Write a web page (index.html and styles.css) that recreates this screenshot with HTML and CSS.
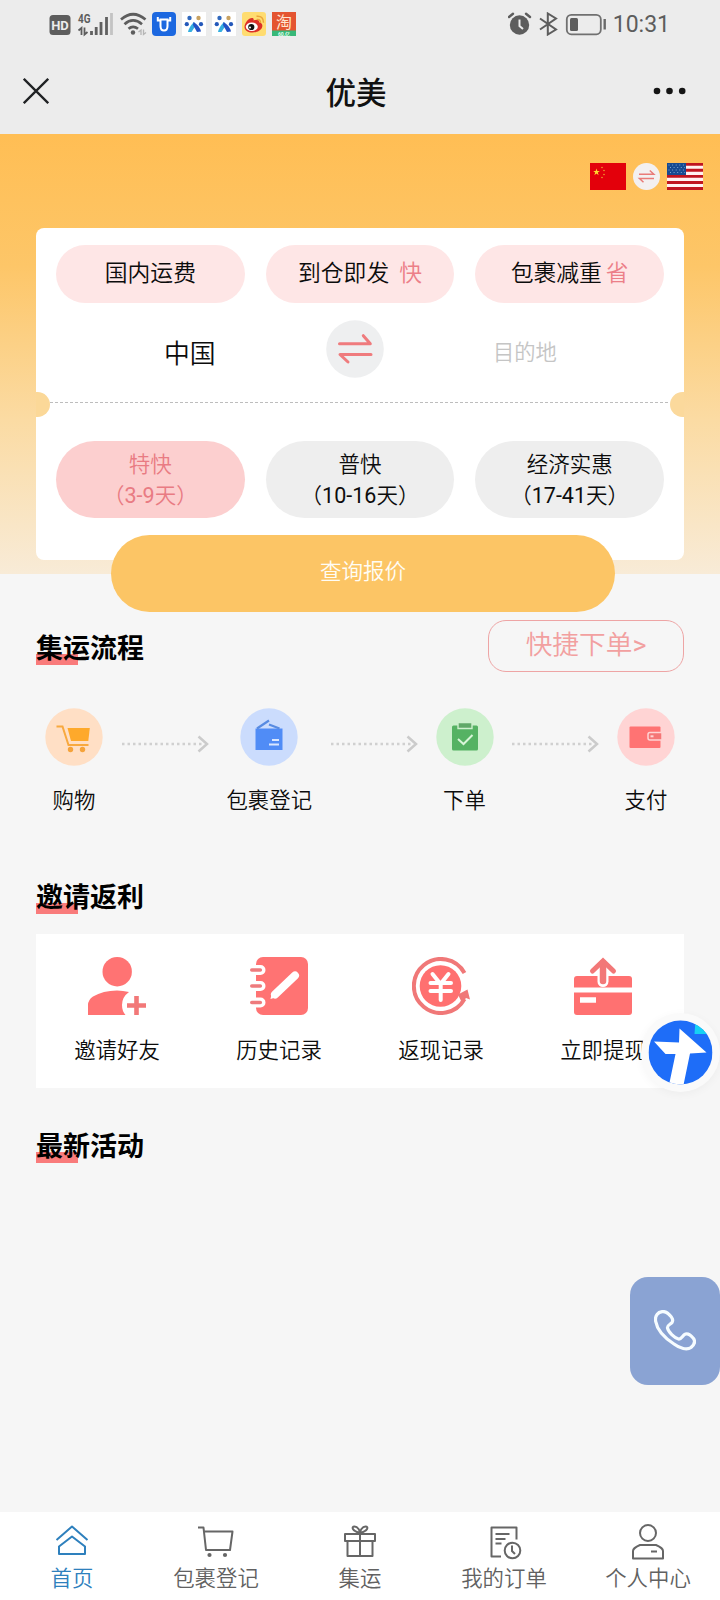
FILE: index.html
```html
<!DOCTYPE html>
<html lang="zh-CN">
<head>
<meta charset="utf-8">
<title>优美</title>
<link rel="stylesheet" href="styles.css">
</head>
<body>
<div class="app">
  <header class="top">
    <div class="status">
      <svg class="status-left" width="300" height="48" viewBox="0 0 300 48">
        <rect x="49.5" y="15" width="21" height="20" rx="3.5" fill="#5d5d5d"/>
        <text x="60" y="30" class="hd" text-anchor="middle">HD</text>
        <text x="78" y="22.800" class="net" textLength="12.500" lengthAdjust="spacingAndGlyphs">4G</text>
        <path d="M78.500 30.500l3-2.500v7M84.500 27.500v7l3-2.500" fill="none" stroke="#5d5d5d" stroke-width="1.800"/>
        <path d="M91.500 35v-4M96.200 35v-8M101 35V22M106.500 35V17" stroke="#606060" stroke-width="2.800"/>
        <path d="M111.500 35V13" stroke="#c3c3c3" stroke-width="2.800"/>
        <g fill="none" stroke="#5d5d5d" stroke-width="2.700"><path d="M121 19.500q12-10.500 24.500 0M124.500 24.200q8.500-7.500 17.500 0M128.500 28.700q4.500-3.800 9.500 0"/></g>
        <circle cx="133" cy="32.500" r="2.200" fill="#5d5d5d"/>
        <path d="M138.500 32l2.500-2v5M143.500 29.500v5l2.500-2" fill="none" stroke="#b5b5b5" stroke-width="1.300"/>
        <rect x="152" y="12" width="24" height="24" rx="4" fill="#1c68e0"/>
        <path d="M157.800 17v3.500h2.500M170.200 17v3.500h-2.500M160.500 19.500h7V26q0 4.500-3.500 4.500t-3.500-4.500z" fill="none" stroke="#fff" stroke-width="2"/>
        <g id="people">
          <rect x="182" y="12" width="24" height="24" fill="#fff"/>
          <circle cx="189.500" cy="18" r="2.200" fill="#3169bd"/><circle cx="198.500" cy="18" r="2.200" fill="#c8a262"/>
          <circle cx="186.800" cy="24.200" r="2.100" fill="#2358ba"/><circle cx="201" cy="24.200" r="2.100" fill="#2358ba"/>
          <path d="M188 32q1-5 6-10l2 3-4.500 7z" fill="#36afe0"/><path d="M193.500 22q6.500 4 7.500 9.500l-4 .5-4-7z" fill="#2352c5"/>
        </g>
        <use href="#people" x="30"/>
        <rect x="242" y="12" width="24" height="24" rx="3" fill="#ffdc70"/>
        <path d="M244.500 27c0-4 4-9 7.500-9 1.500 0 2 1 1.500 2.500 3-1.500 6-1 5.500 1.500 3 1 4 3 3 5.500-1 3-5 5-9.500 5s-8-2-8-5.500z" fill="#dc3028"/>
        <ellipse cx="251.800" cy="26.800" rx="6" ry="4.300" fill="#fff"/><circle cx="251.300" cy="27" r="3.100" fill="#111"/><circle cx="250" cy="27.500" r="1" fill="#fff"/>
        <path d="M257 19.500q3.500-.500 3.500 3.500M256.500 16.300q7-.800 7 6.500" fill="none" stroke="#eba43a" stroke-width="1.500"/>
        <rect x="272" y="12" width="24" height="24" fill="#e45430"/><rect x="272" y="30.500" width="24" height="5.500" fill="#37b878"/>
        <text x="284" y="27.500" class="tao" text-anchor="middle">淘</text>
        <text x="284" y="35.500" class="tao-sub" text-anchor="middle">60.亿</text>
      </svg>
      <div class="status-right">
        <svg width="100" height="24" viewBox="507 12 100 24">
          <circle cx="518.500" cy="25" r="9.700" fill="#5d5d5d"/><path d="M518.500 19.500V26l3.500 3" fill="none" stroke="#ececec" stroke-width="2"/>
          <path d="M508 17l4-3.300M529 17l-4-3.300" stroke="#5d5d5d" stroke-width="2.400" stroke-linecap="round"/>
          <path d="M539 18.500l16 11-8.200 5V13.500l8.200 5-16 11" fill="none" stroke="#5d5d5d" stroke-width="2"/>
          <rect x="565.800" y="14.800" width="34" height="19.500" rx="4.500" fill="none" stroke="#707070" stroke-width="1.800"/>
          <rect x="569" y="18" width="8" height="13" rx="1.500" fill="#5d5d5d"/><path d="M603.700 19v10.500" stroke="#6a6a6a" stroke-width="2.400"/>
        </svg>
        <span class="time">10:31</span>
      </div>
    </div>
    <div class="nav">
      <svg width="26" height="26" viewBox="0 0 26 26"><path d="M.800.800l24.400 24.400M25.200.800L.800 25.200" stroke="#202224" stroke-width="2.300"/></svg>
      <h1 class="title">优美</h1>
      <svg width="33" height="8" viewBox="0 0 33 8" fill="#151515"><circle cx="4" cy="4" r="3.300"/><circle cx="16.500" cy="4" r="3.300"/><circle cx="29.200" cy="4" r="3.300"/></svg>
    </div>
  </header>

  <section class="hero">
    <div class="flags">
      <svg width="36" height="27" viewBox="0 0 36 27"><rect width="36" height="27" fill="#e3000b"/><path d="M6.500 5.500l.8 2.500h2.500L7.800 9.600l.8 2.600-2.100-1.600-2.100 1.600.8-2.600L3.200 8h2.500z" fill="#ffdc30"/><g fill="#f1be38"><circle cx="12" cy="4.500" r=".7"/><circle cx="14" cy="7.500" r=".7"/><circle cx="14" cy="11.500" r=".7"/><circle cx="12" cy="14.500" r=".7"/></g></svg>
      <svg width="27" height="27" viewBox="0 0 27 27"><circle cx="13.500" cy="13.500" r="13.500" fill="#f3f0f0"/><path d="M6 11.200h14.800l-4-3.700M21 15.500H6.500l4 3.700" fill="none" stroke="#e97b78" stroke-width="1.500"/></svg>
      <svg width="36" height="27" viewBox="0 0 36 27"><rect width="36" height="27" fill="#fff1f1"/><path d="M0 1.300h36M0 7.200h36M0 13.400h36M0 19.500h36M0 25.500h36" stroke="#c0141f" stroke-width="2.900"/><rect width="19" height="12" fill="#164a91"/><path d="M1.500 2h17M3 4.500h15M1.500 7h17M3 9.500h15" stroke="#7fa6cf" stroke-width="1" stroke-dasharray="1 2.600"/></svg>
    </div>
    <div class="quote">
      <div class="trio">
        <div class="pill tag">国内运费</div>
        <div class="pill tag">到仓即发<em class="far">快</em></div>
        <div class="pill tag">包裹减重<em class="near">省</em></div>
      </div>
      <div class="route">
        <span class="from">中国</span>
        <svg width="58" height="58" viewBox="0 0 58 58"><circle cx="29" cy="29" r="28.800" fill="#eeeff0"/><path d="M13.500 23.700h30.800l-7-8M45 34.500H14l8 7.500" fill="none" stroke="#ef7b7d" stroke-width="3" stroke-linecap="round" stroke-linejoin="round"/></svg>
        <span class="to">目的地</span>
      </div>
      <div class="perforation"></div>
      <div class="trio speeds">
        <div class="pill speed chosen"><span>特快<br>（<b>3-9</b>天）</span></div>
        <div class="pill speed"><span>普快<br>（<b>10-16</b>天）</span></div>
        <div class="pill speed"><span>经济实惠<br>（<b>17-41</b>天）</span></div>
      </div>
    </div>
  </section>

  <main class="main">
    <div class="query">查询报价</div>
    <div class="head-row">
      <h2 class="heading">集运流程</h2>
      <div class="quick">快捷下单<b>&gt;</b></div>
    </div>
    <div class="steps">
      <div class="step">
        <svg width="58" height="58" viewBox="0 0 58 58"><circle cx="29" cy="29" r="28.700" fill="#ffdfc5"/><path d="M11.500 18.500h6l6 18.500h20" fill="none" stroke="#f8a93f" stroke-width="2"/><path d="M22.500 20h22.300l-1.500 13H26z" fill="#fea92b"/><circle cx="25.500" cy="41.500" r="2.700" fill="#f5a33b"/><circle cx="37.500" cy="41.500" r="2.700" fill="#f5a33b"/></svg>
        <span>购物</span>
      </div>
      <svg class="arrow" width="88" height="18" viewBox="0 0 88 18"><path d="M1 9H82" stroke="#d0d0d0" stroke-width="2.500" stroke-dasharray="2.500 3"/><path d="M77.500 1.500L86 9l-8.500 7.500" fill="none" stroke="#cbcbcb" stroke-width="2.500"/></svg>
      <div class="step">
        <svg width="58" height="58" viewBox="0 0 58 58"><circle cx="29" cy="29" r="28.700" fill="#cbdcfd"/><path d="M15.500 20.500h27V42h-27z" fill="#508cf6"/><path d="M17 20.500l12-8M29 16.500l10.500 4" fill="none" stroke="#588be2" stroke-width="2.200"/><path d="M32 32h7M29 36.500h10" stroke="#d8e6ff" stroke-width="2.200"/></svg>
        <span>包裹登记</span>
      </div>
      <svg class="arrow" width="88" height="18" viewBox="0 0 88 18"><path d="M1 9H82" stroke="#d0d0d0" stroke-width="2.500" stroke-dasharray="2.500 3"/><path d="M77.500 1.500L86 9l-8.500 7.500" fill="none" stroke="#cbcbcb" stroke-width="2.500"/></svg>
      <div class="step">
        <svg width="58" height="58" viewBox="0 0 58 58"><circle cx="29" cy="29" r="28.700" fill="#cdf0cd"/><rect x="16" y="17.500" width="26" height="25" rx="1.500" fill="#55b263"/><path d="M22 14.500h14v6H22z" fill="#60a868" stroke="#cdf0cd" stroke-width="1.400"/><path d="M22 31l5.500 5 9-9" fill="none" stroke="#d8f5d8" stroke-width="2"/></svg>
        <span>下单</span>
      </div>
      <svg class="arrow" width="88" height="18" viewBox="0 0 88 18"><path d="M1 9H82" stroke="#d0d0d0" stroke-width="2.500" stroke-dasharray="2.500 3"/><path d="M77.500 1.500L86 9l-8.500 7.500" fill="none" stroke="#cbcbcb" stroke-width="2.500"/></svg>
      <div class="step">
        <svg width="58" height="58" viewBox="0 0 58 58"><circle cx="29" cy="29" r="28.700" fill="#ffd4d4"/><rect x="12.500" y="18.500" width="31" height="21.500" rx="1" fill="#ff7373"/><path d="M45 24.500H33a2 2 0 0 0-2 2v3.500a2 2 0 0 0 2 2h12z" fill="#f57676" stroke="#ffd4d4" stroke-width="1.500"/><path d="M33.500 28.300h3" stroke="#ffd4d4" stroke-width="2"/></svg>
        <span>支付</span>
      </div>
    </div>

    <h2 class="heading">邀请返利</h2>
    <div class="rebate">
      <div class="cell">
        <svg width="58" height="58" viewBox="0 0 58 58" fill="#ff7373"><circle cx="29.200" cy="14.700" r="14.700"/><path d="M0 58V48q0-5 5-8.500 10-6 24-6 6 0 12 1.500-7 5-7 13 0 6 3.500 10z"/><path d="M39 48.500h19M48.500 39v19" stroke="#f27878" stroke-width="4.600"/></svg>
        <span>邀请好友</span>
      </div>
      <div class="cell">
        <svg width="58" height="58" viewBox="0 0 58 58"><rect x="6" width="52" height="58" rx="7" fill="#ff7373"/><g fill="none" stroke="#fff" stroke-width="10" stroke-linecap="round"><path d="M4 13h6.500M4 29h6.500M4 45.500h6.500"/></g><g fill="none" stroke="#ee7b7d" stroke-width="3.600" stroke-linecap="round"><path d="M1.800 13h8.500M1.800 29h8.500M1.800 45.500h8.500"/></g><path d="M25 37.500l20-19" stroke="#fff" stroke-width="8" stroke-linecap="round"/><path d="M20.500 42l1.500-7 5 5z" fill="#fff"/></svg>
        <span>历史记录</span>
      </div>
      <div class="cell">
        <svg width="58" height="58" viewBox="0 0 58 58"><circle cx="28.500" cy="29" r="20.800" fill="#ff7070"/><path d="M52.500 16A27 27 0 1 0 52.500 42" fill="none" stroke="#f07878" stroke-width="4"/><path d="M46 37.500l9.500-5 2.500 10-4-1.500-4 5z" fill="#f07878"/><path d="M20.500 17l8 10 8-10M18.500 26h20.500M18.500 34h20.500M28.700 26v17" fill="none" stroke="#fff" stroke-width="4" stroke-linecap="round"/></svg>
        <span>返现记录</span>
      </div>
      <div class="cell">
        <svg width="58" height="58" viewBox="0 0 58 58"><rect y="19" width="58" height="39" rx="3" fill="#ff7171"/><path d="M0 33h58" stroke="#fff" stroke-width="5"/><path d="M6 43h16" stroke="#fff" stroke-width="5.500"/><path d="M29 18v6.500" stroke="#fff" stroke-width="11" stroke-linecap="round"/><path d="M29 6v18" stroke="#f27878" stroke-width="6.500" stroke-linecap="round"/><path d="M18.500 14L29 4 39.500 14" fill="none" stroke="#f27878" stroke-width="5" stroke-linecap="round"/></svg>
        <span>立即提现</span>
      </div>
    </div>
    <h2 class="heading">最新活动</h2>
  </main>

  <nav class="tabs">
    <div class="tab active">
      <svg width="36" height="36" viewBox="0 0 36 36"><path d="M2.500 16L18 2.500 33.500 16M5 22.500L18 12.500l13 10V30H5z" stroke-linejoin="round"/></svg>
      <span>首页</span>
    </div>
    <div class="tab">
      <svg width="38" height="36" viewBox="0 0 38 36"><path d="M1 3.500h5.500L9 26h24L35.500 7.500H7" stroke-linejoin="round"/><circle cx="12.500" cy="31" r="2.100" fill="#666" stroke="none"/><circle cx="28" cy="31" r="2.100" fill="#666" stroke="none"/></svg>
      <span>包裹登记</span>
    </div>
    <div class="tab">
      <svg width="36" height="36" viewBox="0 0 36 36"><path d="M3 10h30v7H3zM5.500 17v15h25V17M18 10v22M18 9C10 7 9 2.500 12.500 2.500S18 7 18 9c0-2 2-6.500 5.500-6.500S26 7 18 9z" stroke-linejoin="round"/></svg>
      <span>集运</span>
    </div>
    <div class="tab">
      <svg width="36" height="36" viewBox="0 0 36 36"><path d="M15 32.500H5.500V3.500h25v12M9.500 10h14M9.500 15h10M9.500 19.500h6" stroke-linejoin="round"/><circle cx="26.500" cy="26.500" r="7.800"/><path d="M26 21.500V27l3 3"/></svg>
      <span>我的订单</span>
    </div>
    <div class="tab">
      <svg width="36" height="36" viewBox="0 0 36 36"><circle cx="18" cy="9" r="8"/><path d="M3 34.500V27q0-3 7-6h16q7 3 7 6v7.500zM21 27.500h6" stroke-linejoin="round"/></svg>
      <span>个人中心</span>
    </div>
  </nav>

  <div class="assist">
    <svg width="65" height="65" viewBox="0 0 64 65"><defs><clipPath id="disc"><circle cx="32" cy="32.500" r="32"/></clipPath></defs><g clip-path="url(#disc)"><rect width="64" height="65" fill="#1e6df8"/><path d="M47 0h17v14H46z" fill="#16d1f4"/><path d="M31 8.500l27 24-16.500 1L35 65H20.500L27 34H17L5.500 21.500l25 1z" fill="#fff"/></g></svg>
  </div>
  <div class="call">
    <svg width="42" height="42" viewBox="0 0 42 42"><path d="M3 4.500C5.500 1 11 .5 14 3.500c3 2.500 6 6 4 9-1.500 2-5 2.500-4.500 5.500.7 4 7 10 11 11 3 .7 4-4 7-5 3-.8 6 2 8 4.500 2 3 .5 6.500-2.500 9-4 3-11 1-17-3.500C10 27.500 3 19 1.700 11.500 1.200 9 1.500 6.500 3 4.500z" fill="none" stroke="#f6fcff" stroke-width="3.200"/></svg>
  </div>
</div>
</body>
</html>
```

FILE: styles.css
```css
* { box-sizing: border-box; }

body {
  margin: 0;
  background: #f6f6f6;
  color: #0c0c0c;
  font-family: Roboto, "Noto Sans CJK SC", sans-serif;
  font-weight: 350;
}

svg { display: block; flex: none; }
b { font-weight: 400; }

.app {
  position: relative;
  display: flex;
  flex-direction: column;
  width: 720px;
  height: 1600px;
  overflow: hidden;
}

/* Status bar and title bar */
.top { height: 134px; background: #ececec; }
.status { display: flex; justify-content: space-between; height: 48px; padding-right: 50px; }
.status-right { display: flex; align-items: center; gap: 5px; color: #5d5d5d; }
.time { font-size: 23px; font-weight: 400; line-height: 28px; padding-top: 2px; }
.hd { fill: #ececec; font: 700 13px Roboto, sans-serif; }
.net { fill: #5d5d5d; font: 700 12px Roboto, sans-serif; }
.tao { fill: #ffe4cf; font: 400 16px "Noto Sans CJK SC", sans-serif; }
.tao-sub { fill: #e4fff0; font: 700 5px Roboto, "Noto Sans CJK SC", sans-serif; }
.nav { display: flex; align-items: center; justify-content: space-between; height: 86px; padding: 0 34px 0 23px; }
.title { margin: 5px 0 0 10px; font-size: 30.500px; line-height: 44px; font-weight: 500; color: #111; }

/* Hero */
.hero {
  height: 440px;
  flex: none;
  padding: 29px 36px 0;
  background: linear-gradient(#ffbe54 0%, #fdc668 30%, #fbdba3 65%, #f8ebd7 100%);
}
.flags { display: flex; justify-content: flex-end; gap: 7px; height: 27px; margin-right: -19px; }
.quote { height: 332px; margin-top: 38px; padding-top: 17px; border-radius: 8px; background: #fff; }
.trio { display: grid; grid-template-columns: repeat(3, 1fr); gap: 21px; padding: 0 20px; }
.pill { display: flex; align-items: center; justify-content: center; text-align: center; }
.tag { height: 58px; padding-bottom: 5px; border-radius: 29px; background: #fee6e6; font-size: 22.800px; }
.tag em { font-style: normal; color: #ec7f88; }
.far { margin-left: 10px; }
.near { margin-left: 4px; }
.route { display: grid; grid-template-columns: 290px 58px 1fr; align-items: center; height: 92px; margin-bottom: 7px; }
.from { padding: 5px 0 0 128px; font-size: 25.800px; }
.to { padding: 3px 0 0 109px; font-size: 21.300px; color: #c5c5c5; }
.perforation {
  display: flex;
  justify-content: space-between;
  height: 1px;
  margin: 0 14px;
  background: repeating-linear-gradient(90deg, #bdbdbd 0 3px, transparent 3px 5px);
}
.perforation::before, .perforation::after { content: ""; width: 14px; height: 25px; margin-top: -10px; background: #fbd898; }
.perforation::before { margin-left: -14px; border-radius: 0 13px 13px 0; }
.perforation::after { margin-right: -14px; border-radius: 13px 0 0 13px; background: #fbd99c; }
.speeds { margin-top: 38px; }
.speed { height: 77px; border-radius: 39px; background: #eee; font-size: 21.500px; line-height: 31px; white-space: nowrap; }
.chosen { background: #fccfcf; color: #e97b83; }

/* Content */
.main { flex: 1; padding: 0 36px; }
.query {
  position: relative;
  display: flex;
  align-items: center;
  justify-content: center;
  width: 504px;
  height: 77px;
  margin: -39px auto 0 75px;
  padding-bottom: 8px;
  border-radius: 39px;
  background: #fcc565;
  color: #fffdf5;
  font-size: 21.500px;
}
.head-row { display: flex; justify-content: space-between; align-items: flex-start; margin-top: 8px; height: 52px; }
.heading {
  width: 120px;
  height: 36px;
  margin: 0;
  font-size: 27px;
  line-height: 36px;
  font-weight: 700;
  color: #000;
  background: linear-gradient(#f97b7b, #f97b7b) 0 23px / 42px 11px no-repeat;
}
.head-row .heading { margin-top: 11px; }
.quick {
  width: 196px;
  height: 52px;
  border: 1px solid #eea5a5;
  border-radius: 18px;
  color: #f2a0a0;
  font-size: 26.700px;
  line-height: 48px;
  text-align: center;
}
.steps { display: flex; justify-content: space-between; padding: 0 9px; margin: 36px 0 63px; height: 109px; }
.step { display: flex; flex-direction: column; align-items: center; font-size: 21.400px; line-height: 30px; }
.step span { margin-top: 20px; }
.arrow { margin-top: 27px; }
.rebate { display: grid; grid-template-columns: repeat(4, 1fr); height: 154px; margin: 18px 0 41px; background: #fff; }
.cell { display: flex; flex-direction: column; align-items: center; padding-top: 23px; font-size: 21.400px; line-height: 30px; }
.cell span { margin-top: 21px; }

/* Bottom tabs */
.tabs { display: grid; grid-template-columns: repeat(5, 1fr); flex: none; height: 88px; background: #fff; }
.tab { display: flex; flex-direction: column; align-items: center; justify-content: space-between; padding: 12px 0 6px; color: #616161; font-size: 21.400px; line-height: 30px; }
.tab svg { fill: none; stroke: #666; stroke-width: 2; }
.tab.active { color: #2e80bd; }
.active svg { stroke: #2e80bd; }

/* Floating buttons */
.assist {
  position: absolute;
  left: 641px;
  top: 1013px;
  padding: 7px;
  border-radius: 50%;
  background: #fafafa;
  box-shadow: 0 2px 10px rgba(0, 0, 0, 0.04);
}
.call {
  position: absolute;
  right: 0;
  top: 1277px;
  display: flex;
  align-items: center;
  justify-content: center;
  width: 90px;
  height: 108px;
  border-radius: 18px;
  background: #8aa3d3;
}
```
